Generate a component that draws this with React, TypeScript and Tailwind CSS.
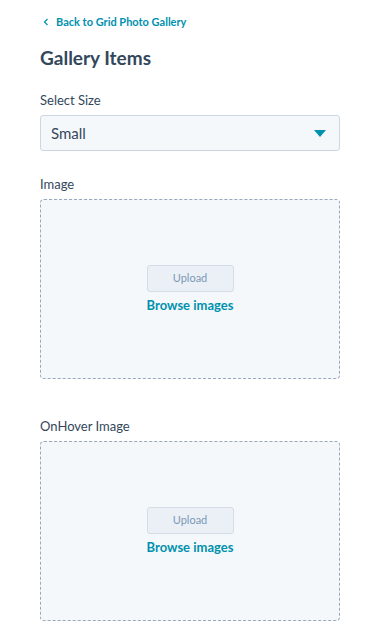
import React from 'react';

const UploadBox: React.FC<{ label: string }> = ({ label }) => (
  <div>
    <label className="block text-[13px] text-[#33475b] mb-[6px] leading-[18px]">{label}</label>
    <div className="h-[180px] rounded-[4px] border border-dashed border-[#98a9bc] bg-[#f5f8fa] flex flex-col items-center justify-center">
      <button
        type="button"
        className="w-[87px] h-[27px] rounded-[3px] border border-[#d4dde7] bg-[#eaf0f6] text-[11px] text-[#7c98b6]"
      >
        Upload
      </button>
      <a className="mt-[4px] text-[13px] font-bold text-[#0091ae] leading-[18px]">Browse images</a>
    </div>
  </div>
);

export default function App() {
  return (
    <div className="w-[380px] h-[639px] bg-white overflow-hidden" style={{ fontFamily: 'Lato, "Open Sans", sans-serif' }}>
      <div className="pl-[40px] pr-[40px] pt-[14px]">
        <a className="flex items-center text-[11px] font-bold text-[#0091ae] leading-[16px]">
          <svg width="6" height="8" viewBox="0 0 6 8" className="ml-[3px] mr-[7px]">
            <path d="M4.5 1 L1.5 4 L4.5 7" fill="none" stroke="#0091ae" strokeWidth="1.2" />
          </svg>
          Back to Grid Photo Gallery
        </a>
        <h1 className="mt-[15px] text-[19px] font-bold text-[#33475b] leading-[26px]">Gallery Items</h1>

        <div className="mt-[20px]">
          <label className="block text-[13px] text-[#33475b] mb-[6px] leading-[18px]">Select Size</label>
          <div className="h-[36px] rounded-[3px] border border-[#cbd6e2] bg-[#f5f8fa] flex items-center justify-between pl-[10px] pr-[13px]">
            <span className="text-[15px] text-[#33475b]">Small</span>
            <svg width="12" height="7" viewBox="0 0 12 7">
              <path d="M0 0 L12 0 L6 7 Z" fill="#0091ae" />
            </svg>
          </div>
        </div>

        <div className="mt-[24px]">
          <UploadBox label="Image" />
        </div>
        <div className="mt-[38px]">
          <UploadBox label="OnHover Image" />
        </div>
      </div>
    </div>
  );
}
